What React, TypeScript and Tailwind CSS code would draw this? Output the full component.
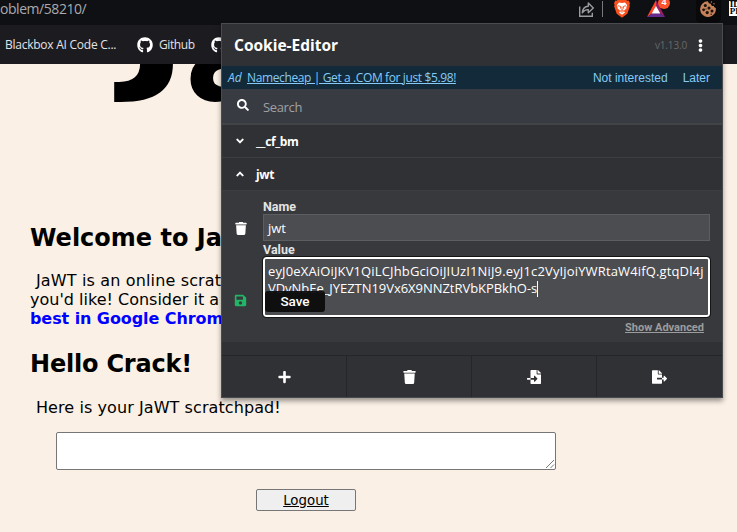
import type { ReactNode } from "react";
import {
  FaSearch,
  FaEllipsisV,
  FaAngleDown,
  FaAngleUp,
  FaTrash,
  FaSave,
  FaPlus,
  FaFileImport,
  FaFileExport,
  FaGithub,
} from "react-icons/fa";

const ui = "font-['Open_Sans','Noto_Sans',sans-serif]";
const page = "font-['DejaVu_Sans',sans-serif]";
const arial = "font-['Liberation_Sans',sans-serif]";
const roboto = "font-['Roboto',sans-serif]";

function ShareIcon() {
  return (
    <svg className="h-[17px] w-[17px]" viewBox="0 0 17 17" fill="none" stroke="#9a9ba0" strokeWidth="1.4">
      <path d="M1.7 5.500v9.800h12.600v-3.600" />
      <path d="M4.300 11.800c.3-4 2.500-6.400 6-6.600V2l5 5-5 4.800V8.600C7.500 8.500 5.700 9.600 4.300 11.800Z" strokeLinejoin="round" />
    </svg>
  );
}

function BraveIcon() {
  return (
    <svg className="h-[19px] w-[16px]" viewBox="0 0 16 19">
      <path d="M4.500 0h7l1.600 1.700 1.600-.2L16 4.300l-.6 1.500.4 1.800-2.500 7.200L8 18.800l-5.300-4L.2 7.600l.4-1.800L0 4.300l1.300-2.800 1.600.2Z" fill="#f9501d" />
      <path d="m5 3.400 3 .6 3-.6 2.200 2.900-.9 1.800.2 1.200-2.800 2.600 1.300 1.500L8 15.800l-3-2.400 1.300-1.500-2.800-2.600.2-1.200-.9-1.800Z" fill="#fff" />
      <path d="m4 6.700 2.800.8-.5 2.200M12 6.700l-2.800.8.5 2.200M8 8v3M6.300 12 8 11l1.700 1L8 13.300Z" fill="none" stroke="#f9501d" strokeWidth=".9" />
    </svg>
  );
}

function BatIcon() {
  return (
    <svg className="h-[17px] w-[18px]" viewBox="0 0 18 17">
      <path d="M9 0 0 17 9 10.500Z" fill="#ff4724" />
      <path d="M9 0l9 17-9-6.500Z" fill="#9e1f63" />
      <path d="M0 17h18l-5.200-3.700H5.200Z" fill="#662d91" />
      <path d="m9 6 4.300 7.600H4.700Z" fill="#fff" />
    </svg>
  );
}

function CookieIcon() {
  return (
    <svg className="h-[16px] w-[16px]" viewBox="0 0 16 16">
      <path d="M8 .2c.2 1.700 1.200 2.600 2.900 2.500.1 1.700 1.300 2.700 3 2.300.1 1.100.8 1.700 1.900 1.900A7.900 7.900 0 1 1 8 .2Z" fill="#c58158" />
      <g fill="#17110f">
        <circle cx="5.300" cy="4.500" r="1.500" />
        <circle cx="9" cy="7" r="1.500" />
        <circle cx="3.600" cy="8.800" r="1.400" />
        <circle cx="7.200" cy="11.600" r="1.600" />
        <circle cx="12" cy="10" r="1.500" />
        <circle cx="11.200" cy="13.200" r=".7" />
        <circle cx="6" cy="8" r=".6" />
      </g>
      <g fill="#c58158">
        <circle cx="11.500" cy="1" r=".7" />
        <circle cx="14" cy="2.800" r=".7" />
      </g>
    </svg>
  );
}

function BrowserBar() {
  return (
    <div className="flex h-[25px] justify-between bg-[#0f1014]">
      <div className={`${ui} mt-[-2px] text-[14px] leading-[22px] tracking-[-0.450px] text-[#a9aaaf]`}>oblem/58210/</div>
      <div className="flex h-[23px] w-[159px]">
        <div className="mt-px h-[17px] w-[17px]"><ShareIcon /></div>
        <div className="ml-[7px] mt-px h-[16px] w-px bg-[#77787d]" />
        <div className="ml-[11px] mt-[-1px]"><BraveIcon /></div>
        <div className="relative ml-[17px] mt-0">
          <BatIcon />
          <span className={`${arial} absolute left-[11px] top-[-3px] flex h-[12px] w-[12px] items-center justify-center rounded-full bg-[#fb542b] text-[9px] font-bold text-white`}>4</span>
        </div>
        <div className="ml-[31px] flex h-[23px] w-[27px] justify-center rounded-b-[5px] bg-[#09090b] pt-px"><CookieIcon /></div>
        <div className="ml-[8px] mt-px h-[15px] w-[9px] overflow-hidden bg-white pl-px font-['Liberation_Serif',serif] text-[9px] font-bold leading-[7px] text-black">ID<br />PF</div>
      </div>
    </div>
  );
}

function Bookmarks() {
  return (
    <div className={`${ui} flex h-[39px] items-center bg-[#1c1b20] pl-[5px] text-[12px] text-[#e3e3e6]`}>
      <span className="w-[132px] whitespace-nowrap tracking-[-0.250px]">Blackbox AI Code C...</span>
      <FaGithub className="h-[16px] w-[16px] text-white" />
      <span className="ml-[6px] w-[52px] tracking-[-0.400px]">Github</span>
      <FaGithub className="h-[16px] w-[16px] text-white" />
    </div>
  );
}

function WebPage() {
  return (
    <div className={`${page} h-[468px] overflow-hidden bg-[#faf0e6] pl-[30px] text-black`}>
      <div className="flex h-[158px] overflow-hidden pl-[94px] font-bold">
        <span className="mt-[-108px] h-[140px] w-[61px] origin-left scale-x-[1.25] text-[140px] leading-[140px]">J</span>
        <span className="mt-[-72px] whitespace-nowrap text-[128px] leading-[128px]">aWT</span>
      </div>
      <h1 className="whitespace-nowrap text-[24px] font-bold leading-[32px]">Welcome to JaWT!</h1>
      <div className="mt-[17px] whitespace-nowrap text-[16px] leading-[19px]">
        <p className="pl-[6px] tracking-[0.150px]">JaWT is an online scratchpad</p>
        <p>you'd like! Consider it a</p>
        <p className="font-bold tracking-[-0.080px] text-[#0000ff]">best in Google Chrome</p>
      </div>
      <h2 className="mt-[20px] text-[24px] font-bold leading-[32px] tracking-[-0.200px]">Hello Crack!</h2>
      <p className="mt-[18px] pl-[6px] text-[16px] leading-[20px] tracking-[0.080px]">Here is your JaWT scratchpad!</p>
      <div className="ml-[26px] mt-[14px] flex h-[38px] w-[500px] items-end justify-end rounded-[2px] border border-[#767676] bg-white">
        <svg className="h-[10px] w-[10px]" viewBox="0 0 10 10" stroke="#777" strokeWidth="1"><path d="M1 9l8-8M5.500 9 9 5.500" /></svg>
      </div>
      <button className="ml-[226px] mt-[19px] flex h-[22px] w-[100px] items-center justify-center rounded-[2px] border border-[#767676] bg-[#efefef] pt-px text-[13.333px] underline">Logout</button>
    </div>
  );
}

function CookieRow({ icon, name }: { icon: ReactNode; name: string }) {
  return (
    <div className="flex h-[33px] items-center border-b border-[#3c3d41] bg-[#303134] pl-[14px] text-white">
      <span className="w-[20px]">{icon}</span>
      <span className="pt-[2px] text-[12px] font-bold tracking-[-0.350px]">{name}</span>
    </div>
  );
}

function Popup() {
  return (
    <div className={`${ui} absolute left-[221px] top-[23px] flex h-[375px] w-[502px] flex-col border border-[#4a4b4e] bg-[#303134] shadow-[0_3px_5px_rgba(0,0,0,0.4)]`}>
      <header className="flex h-[42px] items-center pl-[12px] pr-[17px]">
        <h3 className="flex-1 pt-[2px] text-[15.500px] font-bold text-white">Cookie-Editor</h3>
        <span className="text-[10px] tracking-[-0.150px] text-[#67686b]">v1.13.0</span>
        <FaEllipsisV className="ml-[9px] h-[13px] w-[9px] text-white" />
      </header>
      <div className="flex h-[23px] items-center bg-[#132a3a] pl-[6px] pr-[12px] text-[12px] text-[#86caf5]">
        <i className="w-[19px]">Ad</i>
        <a className="flex-1 whitespace-nowrap tracking-[-0.380px] underline">Namecheap | Get a .COM for just $5.98!</a>
        <span className={`${arial} mr-[15px]`}>Not interested</span>
        <span className={arial}>Later</span>
      </div>
      <div className="flex h-[36px] items-center border-b-2 border-[#424347] bg-[#393b42] pl-[15px]">
        <FaSearch className="mb-[3px] h-[12px] w-[12px] text-white" />
        <span className="ml-[14px] pt-[3px] text-[13px] tracking-[-0.350px] text-[#a1a1a4]">Search</span>
      </div>
      <CookieRow icon={<FaAngleDown className="h-[12px] w-[8px]" />} name="__cf_bm" />
      <CookieRow icon={<FaAngleUp className="h-[12px] w-[8px]" />} name="jwt" />
      <section className="flex h-[151px] bg-[#38393c]">
        <div className="flex w-[41px] flex-col items-center pr-[4px] pt-[31px]">
          <FaTrash className="h-[13px] w-[12px] text-white" />
          <FaSave className="mt-[59px] h-[13px] w-[13px] text-[#21b568]" />
        </div>
        <div className="flex w-[447px] flex-col">
          <label className={`${roboto} mt-[9px] h-[14px] text-[12.500px] font-bold leading-[14px] text-[#e4e4e5]`}>Name</label>
          <div className="flex h-[27px] items-center border border-[#5c5d61] bg-[#4c4d51] pl-[4px] pt-[2px] text-[13px] text-white">jwt</div>
          <label className={`${roboto} mt-[2px] h-[14px] text-[12.500px] font-bold leading-[14px] text-[#e4e4e5]`}>Value</label>
          <div className="relative h-[60px] rounded-[3px] border-2 border-white bg-[#4c4d51] pl-[3px] pt-[4px] text-[13px] leading-[17px] text-white outline outline-[#151515]">
            <div className="whitespace-nowrap tracking-[0.145px]">eyJ0eXAiOiJKV1QiLCJhbGciOiJIUzI1NiJ9.eyJ1c2VyIjoiYWRtaW4ifQ.gtqDl4j</div>
            <div className="flex items-center whitespace-nowrap tracking-[-0.040px]">VDvNbEe_JYEZTN19Vx6X9NNZtRVbKPBkhO-s<span className="h-[16px] w-px bg-white" /></div>
            <span className={`${roboto} absolute left-0 top-[32px] flex h-[21px] w-[60px] items-center justify-center rounded-[3px] bg-[#0c0c0d]/95 text-[13.500px] font-medium`}>Save</span>
          </div>
          <a className={`${roboto} mt-[4px] self-end pr-[6px] text-[11px] font-bold leading-[14px] text-[#9c9c9e] underline`}>Show Advanced</a>
        </div>
      </section>
      <footer className="mt-auto grid h-[42px] grid-cols-4 divide-x divide-[#25262a] border-t border-[#25262a] text-white">
        <div className="flex items-center justify-center"><FaPlus className="h-[14px] w-[13px]" /></div>
        <div className="flex items-center justify-center"><FaTrash className="h-[14px] w-[13px]" /></div>
        <div className="flex items-center justify-center"><FaFileImport className="h-[14px] w-[14px]" /></div>
        <div className="flex items-center justify-center"><FaFileExport className="h-[14px] w-[15px]" /></div>
      </footer>
    </div>
  );
}

export default function App() {
  return (
    <main className="relative h-[532px] w-[737px] overflow-hidden">
      <BrowserBar />
      <Bookmarks />
      <WebPage />
      <Popup />
    </main>
  );
}
